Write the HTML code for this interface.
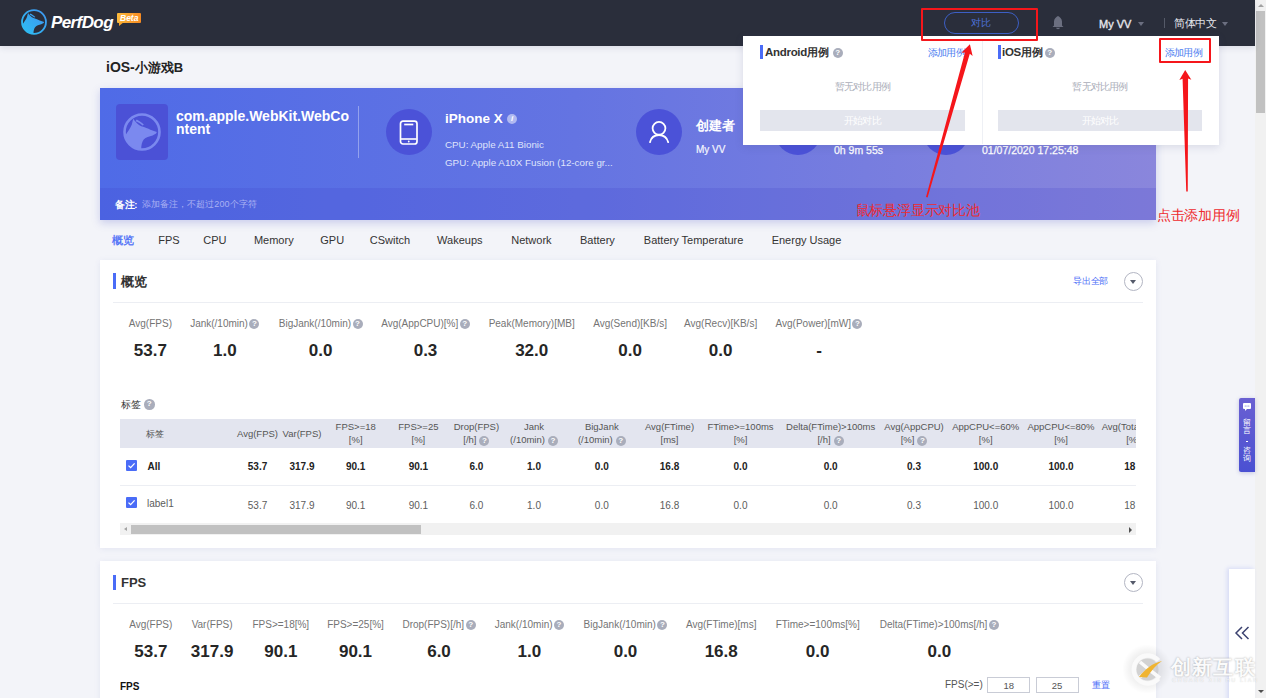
<!DOCTYPE html>
<html><head><meta charset="utf-8">
<style>
*{box-sizing:border-box;margin:0;padding:0}
html,body{width:1266px;height:698px;overflow:hidden}
body{position:relative;background:#f3f4f9;font-family:"Liberation Sans",sans-serif;color:#333}
.a{position:absolute;white-space:nowrap;line-height:1}
.c{position:absolute;white-space:nowrap;line-height:1;text-align:center;width:200px}
.q{display:inline-block;width:10px;height:10px;border-radius:50%;background:#a9adbb;color:#fff;font-size:8px;line-height:10px;text-align:center;font-weight:bold;vertical-align:top;margin-left:1.5px}
#hdr{position:absolute;left:0;top:0;width:1255px;height:46px;background:#2a2e3b;box-shadow:0 2px 6px rgba(40,50,90,.12)}
#sb{position:absolute;left:1255px;top:0;width:11px;height:698px;background:#f1f1f1}
.card{position:absolute;left:100px;width:1056px;background:#fff;box-shadow:0 1px 6px rgba(90,100,180,.10)}
.lbl{font-size:10px;color:#747474}
.val{font-size:17px;font-weight:bold;color:#262626}
.th{font-size:9.5px;color:#555;line-height:12.5px}
.td{font-size:10px;color:#5c5c5c}
.tdb{font-size:10px;color:#222;font-weight:bold}
</style></head><body>

<!-- page scrollbar -->
<div id="sb">
  <div style="position:absolute;left:1px;top:11px;width:9px;height:102px;background:#c1c1c1"></div>
  <div style="position:absolute;left:3px;top:4px;width:0;height:0;border-left:3px solid transparent;border-right:3px solid transparent;border-bottom:3px solid #a3a3a3"></div>
  <div style="position:absolute;left:3px;top:690px;width:0;height:0;border-left:3px solid transparent;border-right:3px solid transparent;border-top:3px solid #505050"></div>
</div>

<!-- header -->
<div id="hdr"></div>


<!-- logo -->
<svg style="position:absolute;left:20.6px;top:8.6px" width="26" height="26" viewBox="0 0 100 100">
  <defs><linearGradient id="lg1" x1="0" y1="1" x2="1" y2="0"><stop offset="0" stop-color="#2cc0f2"/><stop offset="1" stop-color="#3f95f0"/></linearGradient></defs>
  <circle cx="50" cy="50" r="46" fill="none" stroke="url(#lg1)" stroke-width="7"/>
  <path d="M5.2 60.7 C12 50 19 41 23 31 L27 15 C33 24 40 31 48 35 C58 38 66 41 72 44 L89 50 L87 54 L78 59 C69 61 60 64 55 69 C50 75 48 84 47.9 96 A46 46 0 0 1 5.2 60.7 Z M36 17 C44 21 50 25 55 31 L51 33 C46 28 40 24 33 22 Z" fill="url(#lg1)"/>
</svg>
<div class="a" style="left:51px;top:14px;font-size:17px;font-weight:bold;font-style:italic;color:#fff;letter-spacing:-0.6px">PerfDog</div>
<div style="position:absolute;left:117px;top:13px;width:24px;height:10px;background:linear-gradient(90deg,#fcbb3c,#f68a22);border-radius:1px"></div>
<div style="position:absolute;left:119px;top:22px;width:0;height:0;border-top:4px solid #f9a82f;border-right:5px solid transparent"></div>
<div class="a" style="left:120px;top:14px;font-size:8.5px;font-weight:bold;font-style:italic;color:#fff">Beta</div>

<!-- header right -->
<div style="position:absolute;left:944px;top:12px;width:75px;height:22px;border:1px solid #3d5fc5;border-radius:11px"></div>
<div class="a" style="left:971px;top:18px;font-size:10px;color:#4d72dc">对比</div>
<svg style="position:absolute;left:1052px;top:15px" width="12" height="16" viewBox="0 0 12 16"><path d="M6 1 C7.5 1.8 10 3.6 10 6.5 L10 10.5 L11.5 12 L0.5 12 L2 10.5 L2 6.5 C2 3.6 4.5 1.8 6 1 Z" fill="#6b6f80"/><path d="M4 12.8 L8 12.8 C7.6 14.6 4.4 14.6 4 12.8 Z" fill="#6b6f80"/></svg>
<div class="a" style="left:1099px;top:18.5px;font-size:11px;color:#e6e7ec;-webkit-text-stroke:.35px #e6e7ec">My VV</div>
<div style="position:absolute;left:1138px;top:22px;width:0;height:0;border-left:3px solid transparent;border-right:3px solid transparent;border-top:4px solid #6b6f80"></div>
<div style="position:absolute;left:1164px;top:18px;width:1px;height:10px;background:#555a68"></div>
<div class="a" style="left:1174px;top:18px;font-size:11px;letter-spacing:-.5px;color:#e6e7ec">简体中文</div>
<div style="position:absolute;left:1222px;top:22px;width:0;height:0;border-left:3px solid transparent;border-right:3px solid transparent;border-top:4px solid #6b6f80"></div>

<!-- title -->
<div class="a" style="left:106px;top:60.3px;font-size:13px;font-weight:bold;color:#222"><span style="font-size:14px">iOS-</span>小游戏B</div>

<!-- blue card -->
<div style="position:absolute;left:100px;top:88px;width:1056px;height:132px;background:linear-gradient(90deg,#4f6be7 0%,#6474e2 45%,#8a86dc 100%);box-shadow:0 3px 8px rgba(80,90,200,.25)"></div>
<div style="position:absolute;left:100px;top:188px;width:1056px;height:32px;background:rgba(60,60,200,.18)"></div>
<div style="position:absolute;left:116px;top:104px;width:52px;height:56px;border-radius:4px;background:#4b51d6"></div>
<svg style="position:absolute;left:123px;top:113px" width="38" height="38" viewBox="0 0 100 100">
  <circle cx="50" cy="50" r="46" fill="none" stroke="#7b89ef" stroke-width="7"/>
  <path d="M5.2 60.7 C12 50 19 41 23 31 L27 15 C33 24 40 31 48 35 C58 38 66 41 72 44 L89 50 L87 54 L78 59 C69 61 60 64 55 69 C50 75 48 84 47.9 96 A46 46 0 0 1 5.2 60.7 Z M36 17 C44 21 50 25 55 31 L51 33 C46 28 40 24 33 22 Z" fill="#7b89ef"/>
</svg>
<div class="a" style="left:176px;top:110px;font-size:14px;font-weight:bold;color:#fff;line-height:13px">com.apple.WebKit.WebCo<br>ntent</div>
<div style="position:absolute;left:358px;top:106px;width:1px;height:52px;background:rgba(255,255,255,.35)"></div>

<div style="position:absolute;left:385.5px;top:109px;width:46px;height:46px;border-radius:50%;background:#4b52d8"></div>
<svg style="position:absolute;left:398.5px;top:119.5px" width="20" height="26" viewBox="0 0 20 26"><rect x="1.5" y="1.2" width="16.5" height="22.8" rx="2.5" fill="none" stroke="#fff" stroke-width="1.7"/><line x1="5.2" y1="4.5" x2="14.3" y2="4.5" stroke="#fff" stroke-width="1.7"/><line x1="2" y1="19" x2="17.5" y2="19" stroke="#fff" stroke-width="1.6"/><circle cx="9.75" cy="21.5" r="0.9" fill="#fff"/></svg>
<div class="a" style="left:445px;top:112px;font-size:13.5px;font-weight:bold;color:#fff">iPhone X</div>
<div style="position:absolute;left:507px;top:114px;width:10px;height:10px;border-radius:50%;background:rgba(255,255,255,.5);color:#fff;font-size:8px;font-style:italic;font-weight:bold;text-align:center;line-height:10px">i</div>
<div class="a" style="left:445px;top:140px;font-size:9.8px;color:#dfe3fb">CPU: Apple A11 Bionic</div>
<div class="a" style="left:445px;top:158px;font-size:9.8px;color:#dfe3fb">GPU: Apple A10X Fusion (12-core gr...</div>

<div style="position:absolute;left:636px;top:109px;width:46px;height:46px;border-radius:50%;background:#4b52d8"></div>
<svg style="position:absolute;left:647.3px;top:119px" width="24" height="26" viewBox="0 0 24 26"><circle cx="12" cy="9.3" r="6.4" fill="none" stroke="#fff" stroke-width="1.8"/><path d="M3 23.2 C4 18.8 7.5 16 12 16 C16.5 16 20 18.8 21.2 23.2" fill="none" stroke="#fff" stroke-width="1.8" stroke-linecap="round"/></svg>
<div class="a" style="left:696px;top:119px;font-size:13px;font-weight:bold;color:#fff">创建者</div>
<div class="a" style="left:696px;top:145px;font-size:10px;color:#f4f5fe;-webkit-text-stroke:.2px #f4f5fe">My VV</div>

<div style="position:absolute;left:775px;top:109px;width:46px;height:46px;border-radius:50%;background:#4b52d8"></div>
<div class="a" style="left:834px;top:144.5px;font-size:10.5px;color:#fff;-webkit-text-stroke:.25px #fff">0h 9m 55s</div>
<div style="position:absolute;left:923px;top:109px;width:46px;height:46px;border-radius:50%;background:#4b52d8"></div>
<div class="a" style="left:982px;top:144.5px;font-size:10.5px;color:#fff;-webkit-text-stroke:.25px #fff">01/07/2020 17:25:48</div>

<div class="a" style="left:115px;top:200px;font-size:9.5px;font-weight:bold;color:#fff;letter-spacing:-.4px">备注:</div>
<div class="a" style="left:141.5px;top:200px;font-size:9px;color:#a9b0f3;letter-spacing:.1px">添加备注，不超过200个字符</div>


<!-- tabs -->
<div class="c" style="left:22.9px;top:234.5px;font-size:11px;color:#4a6cf7;-webkit-text-stroke:.3px #4a6cf7">概览</div>
<div class="c" style="left:69.0px;top:234.5px;font-size:11px;color:#333">FPS</div>
<div class="c" style="left:114.9px;top:234.5px;font-size:11px;color:#333">CPU</div>
<div class="c" style="left:173.8px;top:234.5px;font-size:11px;color:#333">Memory</div>
<div class="c" style="left:232.2px;top:234.5px;font-size:11px;color:#333">GPU</div>
<div class="c" style="left:289.9px;top:234.5px;font-size:11px;color:#333">CSwitch</div>
<div class="c" style="left:359.8px;top:234.5px;font-size:11px;color:#333">Wakeups</div>
<div class="c" style="left:431.4px;top:234.5px;font-size:11px;color:#333">Network</div>
<div class="c" style="left:497.4px;top:234.5px;font-size:11px;color:#333">Battery</div>
<div class="c" style="left:593.6px;top:234.5px;font-size:11px;color:#333">Battery Temperature</div>
<div class="c" style="left:706.5px;top:234.5px;font-size:11px;color:#333">Energy Usage</div>

<!-- card 1 -->
<div class="card" style="top:260px;height:288px"></div>
<div style="position:absolute;left:113px;top:273px;width:3px;height:16px;background:#4a6cf7"></div>
<div class="a" style="left:120.5px;top:275px;font-size:13px;font-weight:bold;color:#333">概览</div>
<div class="a" style="left:1073px;top:277px;font-size:9px;letter-spacing:-.2px;color:#4a6cf7">导出全部</div>
<div style="position:absolute;left:1124px;top:272px;width:19px;height:19px;border:1px solid #b3b6c3;border-radius:50%"></div>
<div style="position:absolute;left:1130px;top:280px;width:0;height:0;border-left:3.5px solid transparent;border-right:3.5px solid transparent;border-top:4px solid #555a6a"></div>
<div style="position:absolute;left:113px;top:302px;width:1030px;height:1px;background:#eceef3"></div>
<div class="c lbl" style="left:50.4px;top:319px">Avg(FPS)</div>
<div class="c val" style="left:50.4px;top:341.5px">53.7</div>
<div class="c lbl" style="left:124.8px;top:319px">Jank(/10min)<span class="q">?</span></div>
<div class="c val" style="left:124.8px;top:341.5px">1.0</div>
<div class="c lbl" style="left:220.7px;top:319px">BigJank(/10min)<span class="q">?</span></div>
<div class="c val" style="left:220.7px;top:341.5px">0.0</div>
<div class="c lbl" style="left:325.5px;top:319px">Avg(AppCPU)[%]<span class="q">?</span></div>
<div class="c val" style="left:325.5px;top:341.5px">0.3</div>
<div class="c lbl" style="left:431.7px;top:319px">Peak(Memory)[MB]</div>
<div class="c val" style="left:431.7px;top:341.5px">32.0</div>
<div class="c lbl" style="left:530.1px;top:319px">Avg(Send)[KB/s]</div>
<div class="c val" style="left:530.1px;top:341.5px">0.0</div>
<div class="c lbl" style="left:620.6px;top:319px">Avg(Recv)[KB/s]</div>
<div class="c val" style="left:620.6px;top:341.5px">0.0</div>
<div class="c lbl" style="left:719.0px;top:319px">Avg(Power)[mW]<span class="q">?</span></div>
<div class="c val" style="left:719.0px;top:341.5px">-</div>


<!-- tags table -->
<div class="a" style="left:121px;top:399.5px;font-size:10px;color:#333">标签</div>
<span class="q" style="position:absolute;left:142.5px;top:399px;width:10.5px;height:10.5px;line-height:10.5px">?</span>
<div style="position:absolute;left:119.5px;top:419px;width:1016.5px;height:116px;overflow:hidden">
<div style="position:absolute;left:0;top:0;width:1100px;height:28.5px;background:#e3e5ef"></div>
<div style="position:absolute;left:0;top:66px;width:1100px;height:1px;background:#eceef3"></div>
<div style="position:absolute;left:0;top:103.5px;width:1100px;height:1px;background:#eceef3"></div>
<div style="position:absolute;left:0;top:104px;width:1100px;height:12px;background:#f1f1f1"></div>
<div style="position:absolute;left:11px;top:106px;width:290px;height:8.5px;background:#c1c1c1"></div>
<div style="position:absolute;left:4px;top:107.5px;width:0;height:0;border-top:2.5px solid transparent;border-bottom:2.5px solid transparent;border-right:3px solid #a3a3a3"></div>
<div style="position:absolute;left:1009px;top:107.5px;width:0;height:0;border-top:3px solid transparent;border-bottom:3px solid transparent;border-left:3.5px solid #505050"></div>
<div class="a th" style="left:26.5px;top:8.5px;font-size:9px">标签</div>
<div class="c th" style="left:38.0px;top:8.5px">Avg(FPS)</div>
<div class="c tdb" style="left:38.0px;top:42.5px">53.7</div>
<div class="c td" style="left:38.0px;top:81.5px">53.7</div>
<div class="c th" style="left:82.5px;top:8.5px">Var(FPS)</div>
<div class="c tdb" style="left:82.5px;top:42.5px">317.9</div>
<div class="c td" style="left:82.5px;top:81.5px">317.9</div>
<div class="c th" style="left:136.2px;top:2px">FPS>=18<br>[%]</div>
<div class="c tdb" style="left:136.2px;top:42.5px">90.1</div>
<div class="c td" style="left:136.2px;top:81.5px">90.1</div>
<div class="c th" style="left:198.9px;top:2px">FPS>=25<br>[%]</div>
<div class="c tdb" style="left:198.9px;top:42.5px">90.1</div>
<div class="c td" style="left:198.9px;top:81.5px">90.1</div>
<div class="c th" style="left:256.9px;top:2px">Drop(FPS)<br>[/h]<span class="q" style="vertical-align:0px;margin-left:3px">?</span></div>
<div class="c tdb" style="left:256.9px;top:42.5px">6.0</div>
<div class="c td" style="left:256.9px;top:81.5px">6.0</div>
<div class="c th" style="left:314.5px;top:2px">Jank<br>(/10min)<span class="q" style="vertical-align:0px;margin-left:3px">?</span></div>
<div class="c tdb" style="left:314.5px;top:42.5px">1.0</div>
<div class="c td" style="left:314.5px;top:81.5px">1.0</div>
<div class="c th" style="left:382.3px;top:2px">BigJank<br>(/10min)<span class="q" style="vertical-align:0px;margin-left:3px">?</span></div>
<div class="c tdb" style="left:382.3px;top:42.5px">0.0</div>
<div class="c td" style="left:382.3px;top:81.5px">0.0</div>
<div class="c th" style="left:450.0px;top:2px">Avg(FTime)<br>[ms]</div>
<div class="c tdb" style="left:450.0px;top:42.5px">16.8</div>
<div class="c td" style="left:450.0px;top:81.5px">16.8</div>
<div class="c th" style="left:521.0px;top:2px">FTime>=100ms<br>[%]</div>
<div class="c tdb" style="left:521.0px;top:42.5px">0.0</div>
<div class="c td" style="left:521.0px;top:81.5px">0.0</div>
<div class="c th" style="left:611.1px;top:2px">Delta(FTime)>100ms<br>[/h]<span class="q" style="vertical-align:0px;margin-left:3px">?</span></div>
<div class="c tdb" style="left:611.1px;top:42.5px">0.0</div>
<div class="c td" style="left:611.1px;top:81.5px">0.0</div>
<div class="c th" style="left:694.5px;top:2px">Avg(AppCPU)<br>[%]<span class="q" style="vertical-align:0px;margin-left:3px">?</span></div>
<div class="c tdb" style="left:694.5px;top:42.5px">0.3</div>
<div class="c td" style="left:694.5px;top:81.5px">0.3</div>
<div class="c th" style="left:766.2px;top:2px">AppCPU<=60%<br>[%]</div>
<div class="c tdb" style="left:766.2px;top:42.5px">100.0</div>
<div class="c td" style="left:766.2px;top:81.5px">100.0</div>
<div class="c th" style="left:841.5px;top:2px">AppCPU<=80%<br>[%]</div>
<div class="c tdb" style="left:841.5px;top:42.5px">100.0</div>
<div class="c td" style="left:841.5px;top:81.5px">100.0</div>
<div class="c th" style="left:913.5px;top:2px">Avg(TotalCPU)<br>[%]</div>
<div class="a tdb" style="left:1004.8px;top:42.5px">18</div>
<div class="a td" style="left:1004.8px;top:81.5px">18</div>

<svg style="position:absolute;left:6.5px;top:41px" width="11" height="11" viewBox="0 0 11 11"><rect width="11" height="11" rx="1" fill="#4a6cf7"/><path d="M2.5 5.6 L4.6 7.6 L8.6 3.4" fill="none" stroke="#fff" stroke-width="1.3"/></svg>
<svg style="position:absolute;left:6.5px;top:78.3px" width="11" height="11" viewBox="0 0 11 11"><rect width="11" height="11" rx="1" fill="#4a6cf7"/><path d="M2.5 5.6 L4.6 7.6 L8.6 3.4" fill="none" stroke="#fff" stroke-width="1.3"/></svg>
<div class="a tdb" style="left:28px;top:42.5px">All</div>
<div class="a td" style="left:27.5px;top:80px">label1</div>
</div>


<!-- card 2 -->
<div class="card" style="top:561px;height:160px"></div>
<div style="position:absolute;left:113px;top:575px;width:3px;height:15px;background:#4a6cf7"></div>
<div class="a" style="left:121px;top:576px;font-size:13px;font-weight:bold;color:#333">FPS</div>
<div style="position:absolute;left:1124px;top:573px;width:19px;height:19px;border:1px solid #b3b6c3;border-radius:50%"></div>
<div style="position:absolute;left:1130px;top:581px;width:0;height:0;border-left:3.5px solid transparent;border-right:3.5px solid transparent;border-top:4px solid #555a6a"></div>
<div style="position:absolute;left:113px;top:603px;width:1030px;height:1px;background:#eceef3"></div>
<div class="c lbl" style="left:50.8px;top:620px">Avg(FPS)</div>
<div class="c val" style="left:50.8px;top:642.5px">53.7</div>
<div class="c lbl" style="left:112.1px;top:620px">Var(FPS)</div>
<div class="c val" style="left:112.1px;top:642.5px">317.9</div>
<div class="c lbl" style="left:180.8px;top:620px">FPS>=18[%]</div>
<div class="c val" style="left:180.8px;top:642.5px">90.1</div>
<div class="c lbl" style="left:255.5px;top:620px">FPS>=25[%]</div>
<div class="c val" style="left:255.5px;top:642.5px">90.1</div>
<div class="c lbl" style="left:339.0px;top:620px">Drop(FPS)[/h]<span class="q">?</span></div>
<div class="c val" style="left:339.0px;top:642.5px">6.0</div>
<div class="c lbl" style="left:429.4px;top:620px">Jank(/10min)<span class="q">?</span></div>
<div class="c val" style="left:429.4px;top:642.5px">1.0</div>
<div class="c lbl" style="left:525.5px;top:620px">BigJank(/10min)<span class="q">?</span></div>
<div class="c val" style="left:525.5px;top:642.5px">0.0</div>
<div class="c lbl" style="left:621.2px;top:620px">Avg(FTime)[ms]</div>
<div class="c val" style="left:621.2px;top:642.5px">16.8</div>
<div class="c lbl" style="left:717.7px;top:620px">FTime>=100ms[%]</div>
<div class="c val" style="left:717.7px;top:642.5px">0.0</div>
<div class="c lbl" style="left:839.3px;top:620px">Delta(FTime)>100ms[/h]<span class="q">?</span></div>
<div class="c val" style="left:839.3px;top:642.5px">0.0</div>

<div class="a" style="left:120px;top:681.5px;font-size:10px;font-weight:bold;color:#111">FPS</div>
<div class="a" style="left:945px;top:680px;font-size:10px;color:#555">FPS(>=)</div>
<div style="position:absolute;left:987px;top:676.8px;width:43px;height:16px;border:1px solid #c9ccd6;background:#fff"></div>
<div class="c" style="left:908.7px;top:680.5px;font-size:9.5px;color:#555">18</div>
<div style="position:absolute;left:1036px;top:676.8px;width:42.5px;height:16px;border:1px solid #c9ccd6;background:#fff"></div>
<div class="c" style="left:957px;top:680.5px;font-size:9.5px;color:#555">25</div>
<div class="a" style="left:1092px;top:681px;font-size:9px;letter-spacing:-.3px;color:#4a6cf7">重置</div>

<!-- right floats -->
<div style="position:absolute;left:1239px;top:397.5px;width:16px;height:74px;border-radius:2px 0 0 2px;background:linear-gradient(#6a60d2,#4a50d2);box-shadow:0 1px 4px rgba(60,60,160,.25)"></div>
<svg style="position:absolute;left:1243px;top:403px" width="8" height="8" viewBox="0 0 8 8"><rect x="0" y="0" width="8" height="6" rx="1" fill="#fff"/><path d="M2 6 L2 8 L4 6Z" fill="#fff"/><circle cx="2.2" cy="3" r=".5" fill="#5a58d0"/><circle cx="4" cy="3" r=".5" fill="#5a58d0"/><circle cx="5.8" cy="3" r=".5" fill="#5a58d0"/></svg>
<div class="c" style="left:1147px;top:418.5px;font-size:8px;color:#fff">留</div>
<div class="c" style="left:1147px;top:426.5px;font-size:8px;color:#fff">言</div>
<div style="position:absolute;left:1246.3px;top:440.5px;width:1.6px;height:1.6px;background:#fff"></div>
<div class="c" style="left:1147px;top:446.5px;font-size:8px;color:#fff">咨</div>
<div class="c" style="left:1147px;top:454.5px;font-size:8px;color:#fff">询</div>
<div style="position:absolute;left:1228.5px;top:569px;width:26.5px;height:140px;background:#fff;box-shadow:-2px -1px 4px rgba(90,110,240,.18)"></div>
<svg style="position:absolute;left:1234px;top:626px" width="16" height="14" viewBox="0 0 16 14"><path d="M8 1 L2 7 L8 13 M14.5 1 L8.5 7 L14.5 13" fill="none" stroke="#3c4270" stroke-width="1.5"/></svg>


<!-- watermark -->
<div style="position:absolute;left:1122px;top:644px;width:50px;height:50px;border-radius:50%;background:radial-gradient(circle,rgba(0,0,0,.07) 40%,rgba(0,0,0,0) 70%)"></div>
<svg style="position:absolute;left:1129px;top:651px" width="38" height="38" viewBox="0 0 38 38">
  <circle cx="18.5" cy="18.5" r="11" fill="rgba(200,200,200,.75)"/>
  <path d="M29.5 9.5 A14 14 0 1 0 29.5 27.5" fill="none" stroke="#fafafa" stroke-width="4.5"/>
  <path d="M11 11 L20 18.5 L11 26 M20 18.5 L31 27" fill="none" stroke="#fafafa" stroke-width="3.5"/>
  <path d="M10 26 C16 18 24 12 33 10 C27 14 22 20 18 26.5 Z" fill="#f0b430"/>
</svg>
<div class="a" style="left:1171px;top:657px;font-size:20px;color:#fbfbfb;text-shadow:0 0 2px rgba(0,0,0,.35);letter-spacing:1.2px;font-weight:bold">创新互联</div>
<div class="a" style="left:1172px;top:678px;font-size:5.5px;color:rgba(255,255,255,.95);letter-spacing:1.6px;text-shadow:0 0 1px rgba(0,0,0,.25)">CHUANG XIN HU LIAN</div>

<!-- popup -->
<div style="position:absolute;left:743px;top:36px;width:476px;height:109px;background:#fff;box-shadow:0 2px 8px rgba(60,70,120,.15)"></div>
<div style="position:absolute;left:982px;top:41px;width:1px;height:103px;background:#eef0f5"></div>
<div style="position:absolute;left:760px;top:45px;width:3px;height:14px;background:#4a6cf7"></div>
<div class="a" style="left:765px;top:46.5px;font-size:11.5px;font-weight:bold;color:#333;letter-spacing:-.3px">Android<span style="font-size:11px">用例</span></div>
<span class="q" style="position:absolute;left:831.3px;top:47.5px">?</span>
<div class="a" style="left:927.5px;top:47.5px;font-size:10px;letter-spacing:-.6px;color:#4a7cf0">添加用例</div>
<div class="c" style="left:762.4px;top:81.5px;font-size:10px;letter-spacing:-.8px;color:#aaadb8">暂无对比用例</div>
<div style="position:absolute;left:760px;top:110.3px;width:205px;height:20.7px;background:#e3e5ed"></div>
<div class="c" style="left:762.4px;top:116px;font-size:10px;letter-spacing:-.8px;color:#fff">开始对比</div>

<div style="position:absolute;left:998px;top:45px;width:2.5px;height:14px;background:#4a6cf7"></div>
<div class="a" style="left:1002px;top:46.5px;font-size:11.5px;font-weight:bold;color:#333;letter-spacing:-.3px">iOS<span style="font-size:11px">用例</span></div>
<span class="q" style="position:absolute;left:1043.3px;top:47.5px">?</span>
<div class="a" style="left:1164.5px;top:47.5px;font-size:10px;letter-spacing:-.6px;color:#4a7cf0">添加用例</div>
<div class="c" style="left:1000px;top:81.5px;font-size:10px;letter-spacing:-.8px;color:#aaadb8">暂无对比用例</div>
<div style="position:absolute;left:998px;top:110.3px;width:204px;height:20.7px;background:#e3e5ed"></div>
<div class="c" style="left:1000px;top:116px;font-size:10px;letter-spacing:-.8px;color:#fff">开始对比</div>

<!-- annotations -->
<div style="position:absolute;left:921px;top:8px;width:117px;height:32.5px;border:2px solid #f5161b;border-radius:1px"></div>
<div style="position:absolute;left:1159px;top:38px;width:52px;height:25px;border:2px solid #f5161b;border-radius:1px"></div>
<svg style="position:absolute;left:0;top:0" width="1266" height="698" viewBox="0 0 1266 698">
  <path d="M927.57 197.52 L969.79 53.83 L972.64 55.88 L969.90 44.20 L961.47 52.74 L964.97 52.47 L926.03 197.08 Z" fill="#f5161b"/>
  <path d="M1187.75 191.39 L1188.08 78.56 L1191.34 79.71 L1185.20 70.00 L1179.35 79.89 L1182.58 78.64 L1186.25 191.41 Z" fill="#f5161b"/>
</svg>
<div class="a" style="left:855.5px;top:203px;font-size:14px;letter-spacing:-.2px;color:#ee2a2e">鼠标悬浮显示对比池</div>
<div class="a" style="left:1157px;top:207.5px;font-size:14px;letter-spacing:-.3px;color:#ee2a2e">点击添加用例</div>

</body></html>
